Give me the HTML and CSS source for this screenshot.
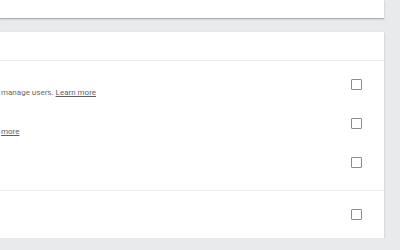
FILE: index.html
```html
<!DOCTYPE html>
<html>
<head>
<meta charset="utf-8">
<link rel="stylesheet" href="styles.css">
</head>
<body>
<div class="page">
  <div class="card card-top"></div>
  <div class="card card-main">
    <div class="card-header"></div>
    <div class="section section-first">
      <div class="row">
        <div class="label"><span class="desc">manage users. <a class="link">Learn more</a></span></div>
        <span class="checkbox"></span>
      </div>
      <div class="row">
        <div class="label"><span class="desc"><a class="link">more</a></span></div>
        <span class="checkbox"></span>
      </div>
      <div class="row">
        <div class="label"></div>
        <span class="checkbox"></span>
      </div>
    </div>
    <div class="section section-last">
      <div class="row row-single">
        <div class="label"></div>
        <span class="checkbox"></span>
      </div>
    </div>
  </div>
</div>
</body>
</html>
```
FILE: styles.css
```css
html, body {
  margin: 0;
  padding: 0;
  background: #e8eaeb;
  font-family: Roboto, "Liberation Sans", sans-serif;
}
.page {
  width: 384px;
  display: flex;
  flex-direction: column;
  gap: 14px;
}
.card {
  background: #ffffff;
  box-shadow: 0 1px 1px rgba(0, 0, 0, 0.22), 0 1px 3px rgba(0, 0, 0, 0.08);
}
.card-top {
  height: 18px;
}
.card-main {
  display: flex;
  flex-direction: column;
}
.card-header {
  height: 28px;
  border-bottom: 1px solid #ebebeb;
}
.section-first {
  padding: 4px 0 8px;
  border-bottom: 1px solid #ebebeb;
}
.row {
  height: 39px;
  display: flex;
  align-items: center;
  padding-right: 22px;
}
.row-single {
  height: 47px;
}
.label {
  flex: 1;
  align-self: stretch;
  padding-top: 22px;
  padding-left: 1px;
  box-sizing: border-box;
}
.desc {
  display: block;
  font-size: 8px;
  line-height: 12px;
  color: #6b6b6b;
  white-space: nowrap;
}
.link {
  color: #5f5f5f;
  text-decoration: underline;
}
.checkbox {
  width: 11px;
  height: 11px;
  box-sizing: border-box;
  border: 1.5px solid #8a8a8a;
  border-radius: 1px;
}
```
